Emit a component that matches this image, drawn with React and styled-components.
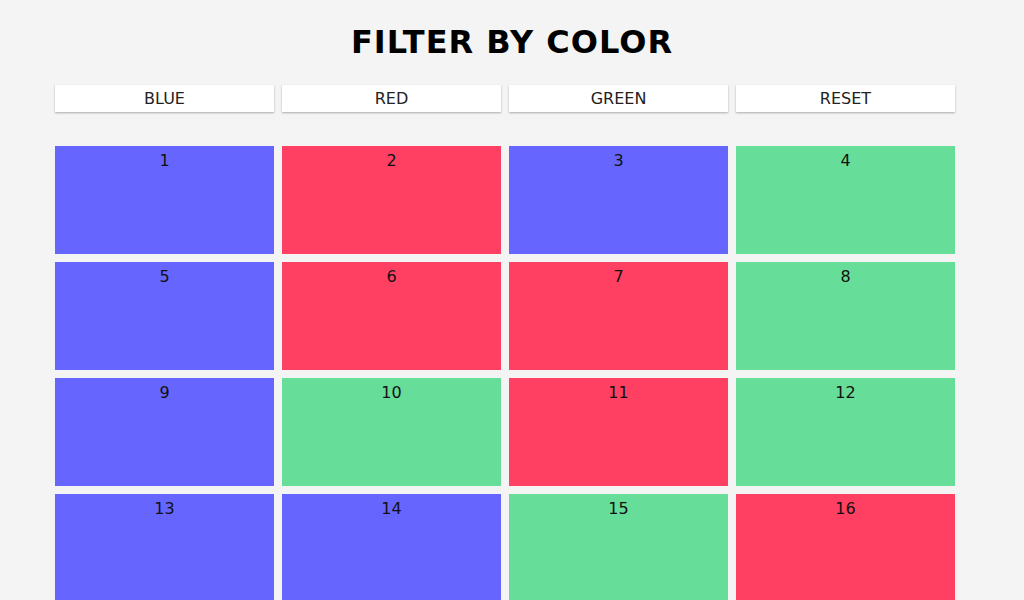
import React, { useState } from 'react';
import styled, { createGlobalStyle } from 'styled-components';

const GlobalStyle = createGlobalStyle`
  body {
    margin: 0;
    background: #f4f4f4;
    font-family: 'DejaVu Sans', Verdana, sans-serif;
  }
`;

const colors = {
  blue: '#6666ff',
  red: '#ff4062',
  green: '#66dd99',
};

const items = [
  'blue', 'red', 'blue', 'green',
  'blue', 'red', 'red', 'green',
  'blue', 'green', 'red', 'green',
  'blue', 'blue', 'green', 'red',
];

export const Page = styled.div`
  padding: 0 0 40px;
`;

export const Title = styled.h1`
  margin: 0;
  padding-top: 23px;
  font-size: 32px;
  line-height: 38px;
  font-weight: bold;
  letter-spacing: 1px;
  text-align: center;
  color: #000;
`;

export const Content = styled.div`
  padding-left: 55px;
`;

export const Filters = styled.div`
  display: grid;
  grid-template-columns: repeat(4, 219px);
  column-gap: 8px;
  margin-top: 24px;
`;

export const FilterButton = styled.button`
  height: 27px;
  border: none;
  background: #fff;
  box-shadow: 0 1px 2px rgba(0, 0, 0, 0.3);
  font-family: 'DejaVu Sans', Verdana, sans-serif;
  font-size: 16px;
  color: #222;
  cursor: pointer;
  padding: 0;
`;

export const Grid = styled.div`
  display: grid;
  grid-template-columns: repeat(4, 219px);
  grid-auto-rows: 108px;
  gap: 8px;
  margin-top: 34px;
`;

export const Cell = styled.div`
  background: ${({ $color }) => colors[$color]};
  padding-top: 5px;
  text-align: center;
  font-size: 16px;
  color: #111;
`;

const App = () => {
  const [filter, setFilter] = useState(null);
  const shown = items
    .map((color, i) => ({ color, n: i + 1 }))
    .filter((it) => !filter || it.color === filter);

  return (
    <Page>
      <GlobalStyle />
      <Title>FILTER BY COLOR</Title>
      <Content>
        <Filters>
          <FilterButton onClick={() => setFilter('blue')}>BLUE</FilterButton>
          <FilterButton onClick={() => setFilter('red')}>RED</FilterButton>
          <FilterButton onClick={() => setFilter('green')}>GREEN</FilterButton>
          <FilterButton onClick={() => setFilter(null)}>RESET</FilterButton>
        </Filters>
        <Grid>
          {shown.map((it) => (
            <Cell key={it.n} $color={it.color}>
              {it.n}
            </Cell>
          ))}
        </Grid>
      </Content>
    </Page>
  );
};

export default App;
